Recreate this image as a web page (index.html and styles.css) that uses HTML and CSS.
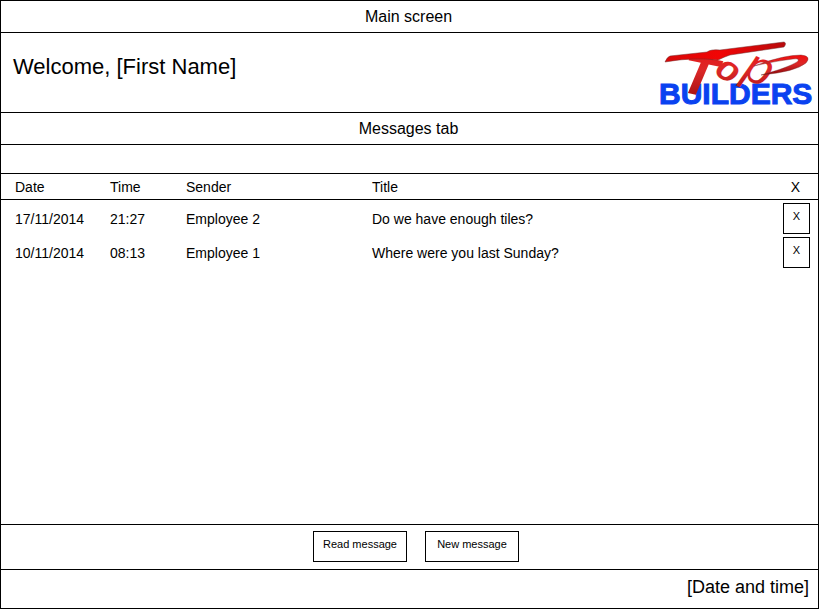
FILE: index.html
```html
<!DOCTYPE html>
<html lang="en">
<head>
<meta charset="utf-8">
<title>Main screen</title>
<link rel="stylesheet" href="styles.css">
</head>
<body>
<div class="screen">
  <div class="bar">Main screen</div>
  <header class="header">
    <h1 class="welcome">Welcome, [First Name]</h1>
    <svg class="logo" width="160" height="72" viewBox="0 0 160 72" role="img" aria-label="Top Builders">
      <defs>
        <linearGradient id="red" x1="0" y1="0" x2="0" y2="1">
          <stop offset="0" stop-color="#f00c0c"/>
          <stop offset="0.45" stop-color="#dc2828"/>
          <stop offset="1" stop-color="#8c0508"/>
        </linearGradient>
        <linearGradient id="swoosh" x1="0" y1="0" x2="1" y2="0">
          <stop offset="0" stop-color="#d80808"/>
          <stop offset="0.45" stop-color="#f20505"/>
          <stop offset="1" stop-color="#b80a0c"/>
        </linearGradient>
      </defs>
      <text class="logo-builders" x="1" y="67">BUILDERS</text>
      <text class="logo-top" fill="url(#red)"><tspan class="logo-t" x="20" y="54" rotate="12">T</tspan><tspan class="logo-o" x="55" y="36" rotate="34">o</tspan><tspan class="logo-p" x="83" y="40" rotate="24">p</tspan></text>
      <path fill="url(#swoosh)" stroke="#6e3030" stroke-width="0.5" d="M7 25Q9 20 12 19L49 15Q53 12 62 13L126 5Q129 6 126 10L72 18Q66 20 60 23Q34 20 7 25Z"/>
      <path fill="url(#red)" stroke="#6e3030" stroke-width="0.4" d="M96 29Q125 18 143 18Q154 19 148 26Q137 35 103 38Q129 31 139 25Q143 21 135 22Q118 24 96 29Z"/>
    </svg>
  </header>
  <div class="bar">Messages tab</div>
  <div class="spacer"></div>
  <main class="messages">
    <table class="list">
      <thead>
        <tr><th class="date">Date</th><th class="time">Time</th><th class="sender">Sender</th><th>Title</th><th class="remove">X</th></tr>
      </thead>
      <tbody>
        <tr><td class="date">17/11/2014</td><td>21:27</td><td>Employee 2</td><td>Do we have enough tiles?</td><td class="remove"><button class="box delete" type="button" aria-label="Delete message from Employee 2">X</button></td></tr>
        <tr><td class="date">10/11/2014</td><td>08:13</td><td>Employee 1</td><td>Where were you last Sunday?</td><td class="remove"><button class="box delete" type="button" aria-label="Delete message from Employee 1">X</button></td></tr>
      </tbody>
    </table>
  </main>
  <div class="actions">
    <button class="box action" type="button">Read message</button>
    <button class="box action" type="button">New message</button>
  </div>
  <footer class="footer">[Date and time]</footer>
</div>
</body>
</html>
```
FILE: styles.css
```css
* {
  box-sizing: border-box;
}

body {
  margin: 0;
  background: #fff;
  color: #000;
  font-family: "Liberation Sans", Arial, Helvetica, sans-serif;
}

.screen {
  display: flex;
  flex-direction: column;
  min-height: 100vh;
  border: 1px solid #000;
}

.bar {
  height: 32px;
  padding-right: 2px;
  border-bottom: 1px solid #000;
  font-size: 16px;
  line-height: 31px;
  text-align: center;
}

.header {
  display: flex;
  justify-content: space-between;
  align-items: flex-start;
  height: 80px;
  padding: 4px 0 0 12px;
  border-bottom: 1px solid #000;
}

.welcome {
  margin: 16px 0 0;
  font-size: 22px;
  font-weight: 400;
  line-height: 28px;
}

.logo {
  flex: none;
  overflow: visible;
}

.logo-builders {
  fill: #0a42f0;
  stroke: #0a42f0;
  stroke-width: 1px;
  font-size: 30px;
  font-weight: 700;
}

.logo-top {
  font-style: italic;
  font-weight: 700;
}

.logo-t {
  font-size: 56px;
}

.logo-o {
  font-size: 36px;
}

.logo-p {
  font-size: 48px;
  font-weight: 400;
}

.spacer {
  height: 29px;
  border-bottom: 1px solid #000;
}

.messages {
  flex: 1;
}

.list {
  width: 100%;
  border-collapse: separate;
  border-spacing: 0;
  font-size: 14px;
  line-height: 18px;
  text-align: left;
}

.list th {
  height: 26px;
  padding: 0;
  border-bottom: 1px solid #000;
  font-weight: 400;
}

.list td {
  height: 34px;
  padding: 3px 0 0;
}

.list .date {
  width: 109px;
  padding-left: 14px;
}

.time {
  width: 76px;
}

.sender {
  width: 186px;
}

.list .remove {
  width: 43px;
  padding-right: 8px;
  text-align: right;
}

.list th.remove {
  padding-right: 18px;
}

.box {
  padding: 0 0 5px;
  border: 1px solid #000;
  background: #fff;
  color: #000;
  font-family: inherit;
  font-size: 11px;
}

.delete {
  display: block;
  width: 27px;
  height: 31px;
  margin-left: auto;
}

.actions {
  display: flex;
  justify-content: center;
  gap: 18px;
  height: 46px;
  padding: 6px 0 0 13px;
  border-top: 1px solid #000;
  border-bottom: 1px solid #000;
}

.action {
  width: 94px;
  height: 31px;
}

.footer {
  height: 38px;
  padding-right: 9px;
  font-size: 18px;
  line-height: 34px;
  text-align: right;
}
```
